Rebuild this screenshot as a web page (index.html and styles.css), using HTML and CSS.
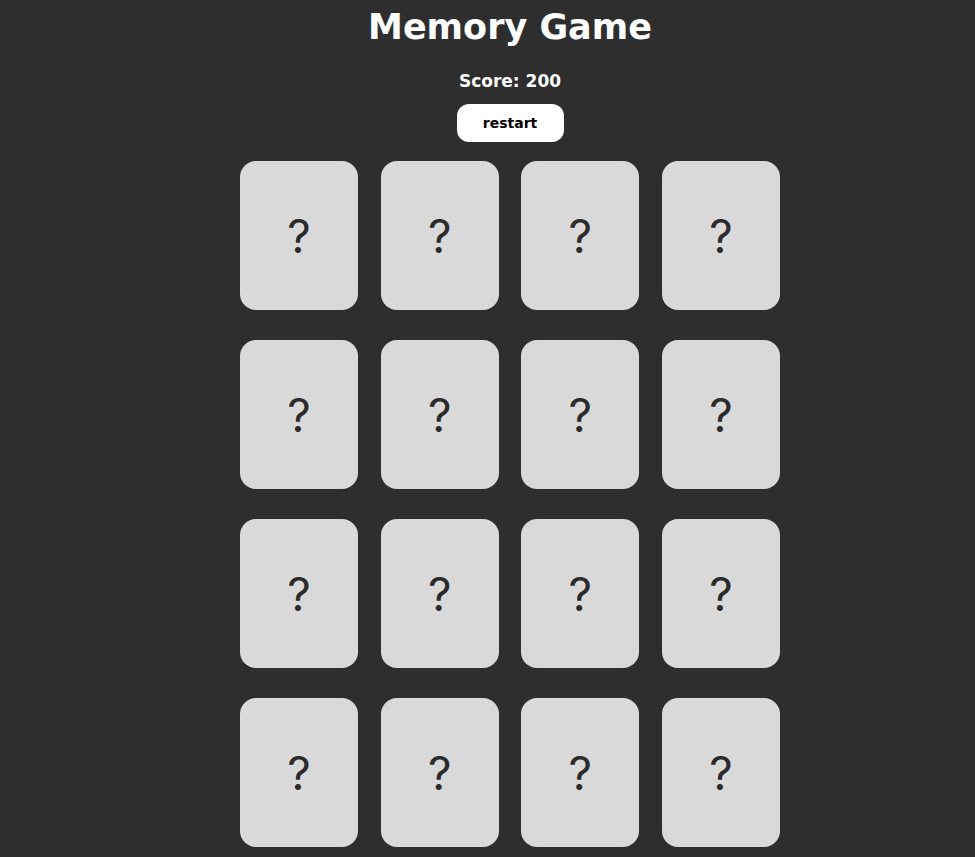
FILE: index.html
```html
<!DOCTYPE html>
<html lang="en">
<head>
<meta charset="utf-8">
<title>Memory Game</title>
<link rel="stylesheet" href="styles.css">
</head>
<body>
<main class="app">
  <h1 class="title">Memory Game</h1>
  <p class="score">Score: 200</p>
  <button class="restart" type="button">restart</button>
  <div class="board">
    <div class="card">?</div><div class="card">?</div><div class="card">?</div><div class="card">?</div>
    <div class="card">?</div><div class="card">?</div><div class="card">?</div><div class="card">?</div>
    <div class="card">?</div><div class="card">?</div><div class="card">?</div><div class="card">?</div>
    <div class="card">?</div><div class="card">?</div><div class="card">?</div><div class="card">?</div>
  </div>
</main>
</body>
</html>
```
FILE: styles.css
```css
html, body {
  margin: 0;
  padding: 0;
  background: #2e2e2e;
}

body {
  font-family: "DejaVu Sans", "Liberation Sans", sans-serif;
  color: #ffffff;
}

.app {
  display: flex;
  flex-direction: column;
  align-items: center;
  padding-left: 45px;
  padding-bottom: 40px;
}

.title {
  margin: 0 0 17px;
  padding-top: 2px;
  font-size: 35px;
  line-height: 50px;
  font-weight: 700;
  color: #ffffff;
}

.score {
  margin: 0 0 11px;
  font-size: 17px;
  line-height: 24px;
  font-weight: 700;
}

.restart {
  width: 107px;
  height: 38px;
  border: none;
  border-radius: 12px;
  background: #ffffff;
  color: #000000;
  font-family: inherit;
  font-size: 14px;
  font-weight: 700;
  padding: 0;
  margin: 0 0 19px;
}

.board {
  width: 540px;
  display: grid;
  grid-template-columns: repeat(4, 118px);
  justify-content: space-between;
  row-gap: 30px;
}

.card {
  height: 149px;
  border-radius: 16px;
  background: #d9d9d9;
  color: #2b2b2b;
  display: flex;
  align-items: center;
  justify-content: center;
  font-family: "Inter", "Noto Sans", sans-serif;
  font-size: 46px;
  font-weight: 400;
}
```
